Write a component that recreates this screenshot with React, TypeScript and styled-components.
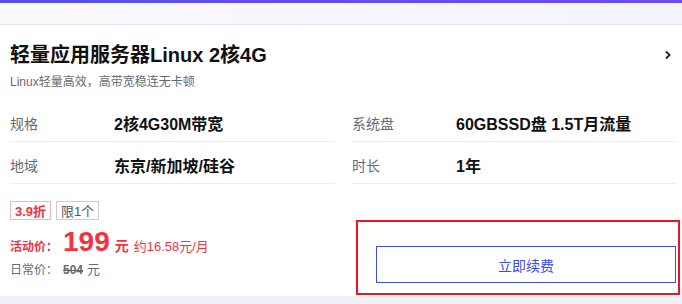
import React from 'react';
import styled, { createGlobalStyle } from 'styled-components';

const GlobalStyle = createGlobalStyle`
  body {
    margin: 0;
    background: #ffffff;
    font-family: "Liberation Sans", "Noto Sans CJK SC", sans-serif;
  }
`;

const Page = styled.div`
  width: 682px;
  height: 304px;
  overflow: hidden;
  background: #f0f1f7;
`;

const TopBar = styled.div`
  height: 3px;
  background: linear-gradient(90deg, #5750ef 0%, #6b4cf4 100%);
`;

const HeaderStrip = styled.div`
  height: 21px;
  background: linear-gradient(90deg, #fafafd 0%, #f3f4fb 100%);
  border-bottom: 1px solid #e4e5ec;
`;

const Card = styled.div`
  height: 271px;
  box-sizing: border-box;
  background: #ffffff;
  padding: 16px 2px 0 10px;
`;

const TitleRow = styled.div`
  display: flex;
  align-items: center;
  justify-content: space-between;
  padding-right: 8px;
`;

const Title = styled.h1`
  margin: 0;
  font-size: 20px;
  line-height: 28px;
  font-weight: 700;
  color: #111111;
`;

const Subtitle = styled.div`
  margin-top: 5px;
  font-size: 12px;
  line-height: 16px;
  color: #666a73;
`;

const SpecGrid = styled.div`
  display: grid;
  grid-template-columns: 325px 324px;
  column-gap: 17px;
  margin-top: 10px;
`;

const SpecRow = styled.div`
  display: flex;
  align-items: center;
  height: 42px;
  box-sizing: border-box;
  padding-top: 5px;
  border-bottom: 1px solid #ebedf1;
`;

const SpecLabel = styled.span`
  width: 104px;
  font-size: 14px;
  color: #666a73;
`;

const SpecValue = styled.span`
  font-size: 16px;
  font-weight: 700;
  color: #111111;
`;

const Bottom = styled.div`
  display: grid;
  grid-template-columns: 346px 324px;
`;

const PriceCol = styled.div`
  padding-top: 17px;
`;

const Tags = styled.div`
  display: flex;
  gap: 5px;
`;

const Tag = styled.span<{ $red?: boolean }>`
  display: inline-flex;
  align-items: center;
  height: 19px;
  box-sizing: border-box;
  padding: 0 4px;
  font-size: 13px;
  font-weight: ${(p) => (p.$red ? 700 : 400)};
  border: 1px solid ${(p) => (p.$red ? '#f9b4b8' : '#c9cdd6')};
  color: ${(p) => (p.$red ? '#f2323f' : '#4a5468')};
`;

const ActivityRow = styled.div`
  display: flex;
  align-items: baseline;
  margin-top: 5px;
  color: #f2323f;
`;

const ActivityLabel = styled.span`
  width: 53px;
  font-size: 12px;
  font-weight: 700;
`;

const BigPrice = styled.span`
  font-size: 28px;
  line-height: 34px;
  font-weight: 700;
`;

const Unit = styled.span`
  margin-left: 5px;
  font-size: 14px;
  font-weight: 700;
`;

const Monthly = styled.span`
  margin-left: 5px;
  font-size: 13px;
`;

const DailyRow = styled.div`
  display: flex;
  align-items: baseline;
  font-size: 12px;
  color: #666a73;
`;

const DailyLabel = styled.span`
  width: 53px;
`;

const OldPrice = styled.span`
  font-weight: 700;
  text-decoration: line-through;
`;

const OldUnit = styled.span`
  margin-left: 4px;
  font-size: 13px;
`;

const ActionBox = styled.div`
  margin-top: 36px;
  height: 75px;
  box-sizing: border-box;
  border: 2px solid #f0141e;
  padding: 24px 2px 0 18px;
`;

const RenewButton = styled.button`
  display: block;
  width: 300px;
  height: 37px;
  box-sizing: border-box;
  border: 1px solid #3c4cf0;
  background: #ffffff;
  color: #3c4cf0;
  font-family: inherit;
  font-size: 14px;
  cursor: pointer;
`;

const Chevron = () => (
  <svg width="8" height="10" viewBox="0 0 8 10">
    <path d="M2 1.5 L5.6 5 L2 8.5" fill="none" stroke="#222" strokeWidth="1.8" />
  </svg>
);

const specs = [
  { label: '规格', value: '2核4G30M带宽' },
  { label: '系统盘', value: '60GBSSD盘 1.5T月流量' },
  { label: '地域', value: '东京/新加坡/硅谷' },
  { label: '时长', value: '1年' },
];

const App: React.FC = () => {
  return (
    <Page>
      <GlobalStyle />
      <TopBar />
      <HeaderStrip />
      <Card>
        <TitleRow>
          <Title>轻量应用服务器Linux 2核4G</Title>
          <Chevron />
        </TitleRow>
        <Subtitle>Linux轻量高效，高带宽稳连无卡顿</Subtitle>
        <SpecGrid>
          {specs.map((s) => (
            <SpecRow key={s.label}>
              <SpecLabel>{s.label}</SpecLabel>
              <SpecValue>{s.value}</SpecValue>
            </SpecRow>
          ))}
        </SpecGrid>
        <Bottom>
          <PriceCol>
            <Tags>
              <Tag $red>3.9折</Tag>
              <Tag>限1个</Tag>
            </Tags>
            <ActivityRow>
              <ActivityLabel>活动价：</ActivityLabel>
              <BigPrice>199</BigPrice>
              <Unit>元</Unit>
              <Monthly>约16.58元/月</Monthly>
            </ActivityRow>
            <DailyRow>
              <DailyLabel>日常价：</DailyLabel>
              <OldPrice>504</OldPrice>
              <OldUnit>元</OldUnit>
            </DailyRow>
          </PriceCol>
          <ActionBox>
            <RenewButton>立即续费</RenewButton>
          </ActionBox>
        </Bottom>
      </Card>
    </Page>
  );
};

export default App;
